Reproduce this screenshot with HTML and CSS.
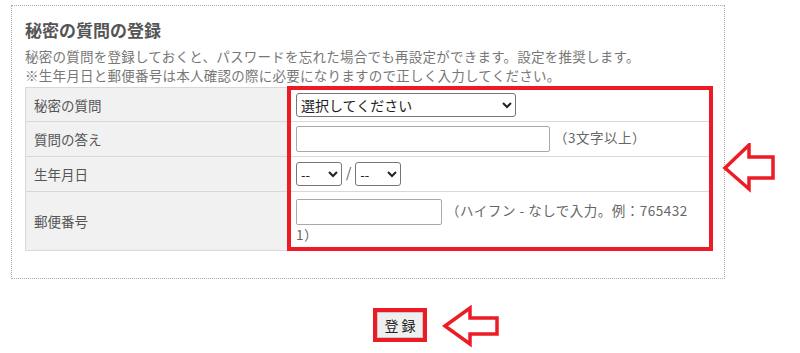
FILE: index.html
```html
<!DOCTYPE html>
<html lang="ja">
<head>
<meta charset="utf-8">
<title>秘密の質問の登録</title>
<link rel="stylesheet" href="styles.css">
</head>
<body>
<div class="page">
  <section class="box">
    <h2 class="title">秘密の質問の登録</h2>
    <p class="lead">秘密の質問を登録しておくと、パスワードを忘れた場合でも再設定ができます。設定を推奨します。</p>
    <p class="lead">※生年月日と郵便番号は本人確認の際に必要になりますので正しく入力してください。</p>
    <div class="table-wrap">
      <table class="form">
        <tr class="r1">
          <th>秘密の質問</th>
          <td>
            <select class="sel-q">
              <option>選択してください</option>
            </select>
          </td>
        </tr>
        <tr class="r2">
          <th>質問の答え</th>
          <td><input type="text" class="in-answer"> <span class="note">（3文字以上）</span></td>
        </tr>
        <tr class="r3">
          <th>生年月日</th>
          <td>
            <select class="sel-d"><option>--</option></select>
            <span class="slash">/</span>
            <select class="sel-d"><option>--</option></select>
          </td>
        </tr>
        <tr class="r4">
          <th>郵便番号</th>
          <td class="zip"><input type="text" class="in-zip"> <span class="note">（ハイフン - なしで入力。例：765432<wbr>1）</span></td>
        </tr>
      </table>
      <div class="hl-box"></div>
      <svg class="arrow arrow-big" width="60" height="56" viewBox="0 0 60 56">
        <polygon points="3,25 27,2 27,14 51,14 51,35 27,35 27,46" fill="none" stroke="#ed1c24" stroke-width="3.5" stroke-linejoin="miter"/>
      </svg>
    </div>
  </section>
  <div class="actions">
    <span class="btn-hl"><button class="btn" type="button">登 録</button></span>
    <svg class="arrow arrow-btn" width="62" height="46" viewBox="0 0 62 46">
      <polygon points="3,21 28,3 28,13 55,13 55,29 28,29 28,39" fill="none" stroke="#ed1c24" stroke-width="3.5" stroke-linejoin="miter"/>
    </svg>
  </div>
</div>
</body>
</html>
```
FILE: styles.css
```css
html, body {
  margin: 0;
  padding: 0;
  background: #fff;
}
body {
  font-family: "Noto Sans CJK JP", sans-serif;
  color: #555;
}
.page {
  width: 800px;
  height: 353px;
  overflow: hidden;
  padding-top: 5px;
  box-sizing: border-box;
}
.box {
  margin-left: 11px;
  width: 714px;
  height: 274px;
  box-sizing: border-box;
  border: 1px dotted #aaa;
  padding: 12px 12px 0 13px;
}
.title {
  margin: 0 0 5px;
  font-size: 17px;
  line-height: 24px;
  font-weight: bold;
  color: #555;
}
.lead {
  margin: 0;
  font-size: 13.5px;
  line-height: 18px;
  height: 18px;
  letter-spacing: 0.25px;
  color: #777;
  white-space: nowrap;
}
.lead + .lead {
  margin-top: 1px;
}
.table-wrap {
  position: relative;
  margin-top: 3px;
}
.form {
  border-collapse: collapse;
  width: 688px;
  font-size: 13.5px;
}
.form th, .form td {
  border: 1px solid #d8d8d8;
  padding: 4px 8px;
  line-height: 18px;
  vertical-align: middle;
  text-align: left;
}
.form th {
  width: 245px;
  background: #f1f1f1;
  font-weight: normal;
  color: #555;
}
.form td {
  background: #fff;
  color: #666;
}
.r1 { height: 34px; }
.r2 { height: 35px; }
.r3 { height: 35px; }
.r4 { height: 59px; }
.zip {
  padding-right: 14px;
}
select, input {
  font-family: "Noto Sans CJK JP", sans-serif;
  box-sizing: border-box;
  margin: 0;
  vertical-align: middle;
}
.sel-q {
  width: 220px;
  height: 24px;
  font-size: 14px;
  color: #222;
  border: 1px solid #767676;
  border-radius: 3px;
  background: #fff;
}
.sel-d {
  width: 46px;
  height: 24px;
  font-size: 13px;
  color: #222;
  border: 1px solid #767676;
  border-radius: 3px;
  background: #fff;
}
.slash {
  margin: 0 1px;
  color: #555;
}
.in-answer, .in-zip {
  height: 26px;
  border: 1px solid #a9a9a9;
  border-radius: 2px;
  background: #fff;
}
.in-answer { width: 254px; }
.in-zip { width: 146px; }
.note {
  margin-left: 1px;
  letter-spacing: 0.5px;
  color: #666;
}
.hl-box {
  position: absolute;
  left: 262px;
  top: -1px;
  width: 426px;
  height: 165px;
  box-sizing: border-box;
  border: 4px solid #ed1c24;
}
.arrow {
  position: absolute;
  display: block;
}
.arrow-big {
  left: 697px;
  top: 56px;
}
.actions {
  position: relative;
  margin-top: 29px;
  display: flex;
  justify-content: center;
}
.btn-hl {
  display: inline-block;
  border: 4px solid #ed1c24;
  padding: 0;
  line-height: 0;
}
.btn {
  width: 46px;
  height: 26px;
  font-family: "Noto Sans CJK JP", sans-serif;
  font-size: 14px;
  color: #222;
  background: #efefef;
  border: 1px solid #c8c8c8;
  border-radius: 0;
  padding: 0;
}
.arrow-btn {
  left: 442px;
  top: -3px;
}
```
